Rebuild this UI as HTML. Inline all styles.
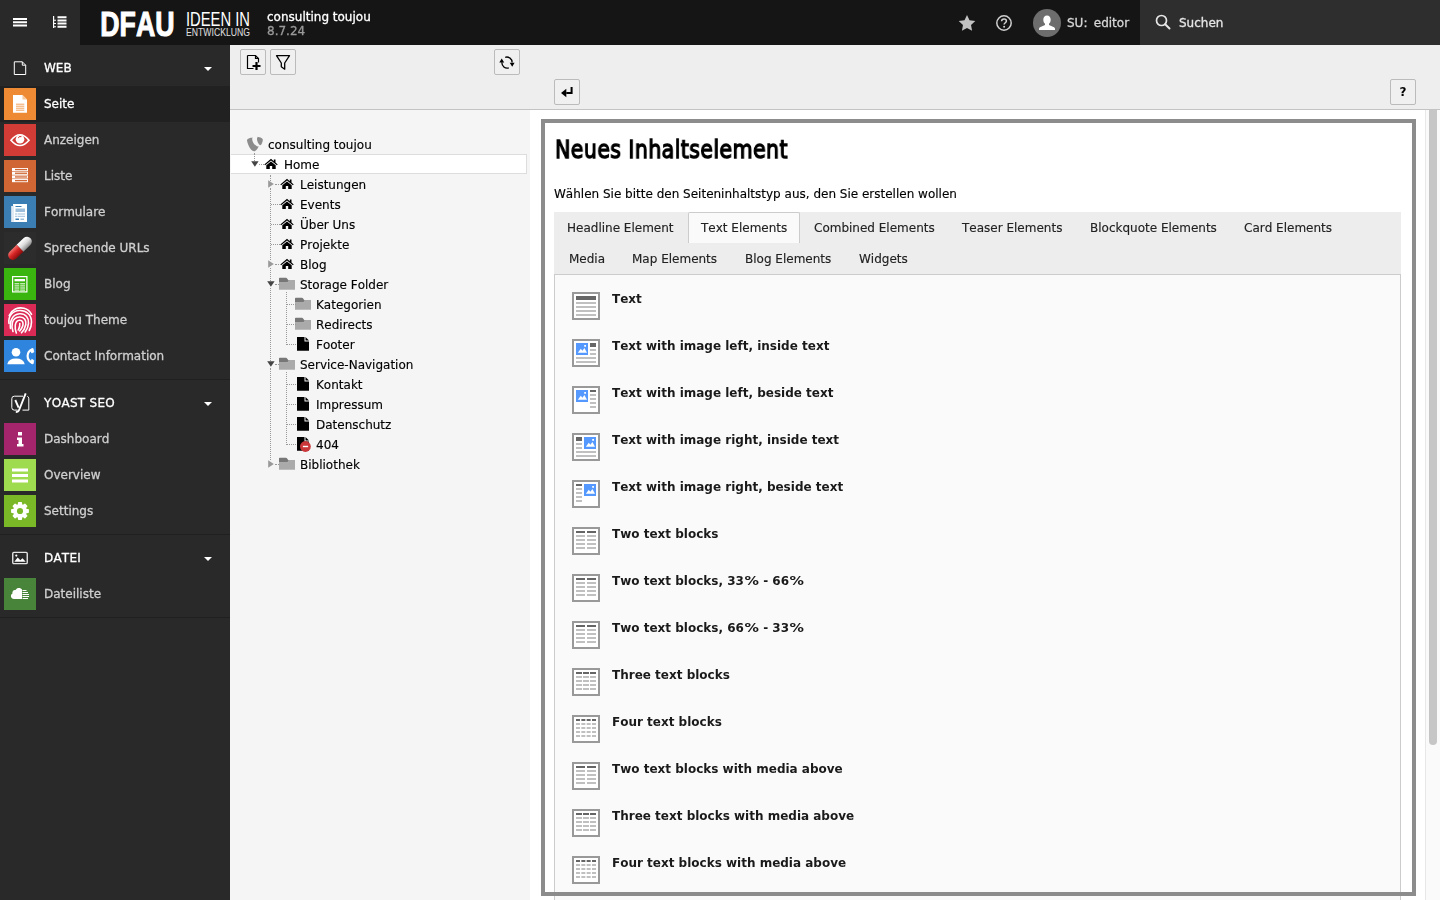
<!DOCTYPE html>
<html lang="de">
<head>
<meta charset="utf-8">
<title>consulting toujou [TYPO3 CMS 8.7.24]</title>
<style>
*{box-sizing:border-box;margin:0;padding:0}
html,body{width:1440px;height:900px;overflow:hidden;background:#fff}
body{font-family:"DejaVu Sans","Liberation Sans",sans-serif;font-size:12px;color:#000;position:relative;font-kerning:none}
svg{display:block}
.mg .t,.mi .l,.row span,.tab,.it b,#intro,#site,#user,#search span,.btn .q{will-change:transform}
.mg .t,.mi .l,#site,#user,#search span{-webkit-text-stroke:.3px}
.row span,.tab,#intro{-webkit-text-stroke:.15px}
/* topbar */
#topbar{position:absolute;left:0;top:0;width:1440px;height:45px;background:#151515;color:#fff}
#tb-left{position:absolute;left:0;top:0;width:80px;height:45px;background:#292929}
#tb-left .b{position:absolute;top:0;width:40px;height:45px}
#logo{position:absolute;left:99px;top:0;height:45px;width:160px}
#site{position:absolute;left:267px;top:10px;font-size:12px;line-height:14px;color:#fff;font-weight:bold}
#site .n{display:block;font-weight:normal;color:#fff}
#site .v{display:block;color:#9a9a9a;font-weight:normal}
#tb-right{position:absolute;right:0;top:0;height:45px}
#search{position:absolute;left:1140px;top:0;width:300px;height:45px;background:#2e2e2e}
#search span{position:absolute;left:39px;top:15px;font-size:12px;line-height:16px;color:#e6e6e6}
#user{word-spacing:2.500px;position:absolute;left:1067px;top:15px;font-size:12px;line-height:16px;color:#d7d7d7}
/* module menu */
#mm{position:absolute;left:0;top:45px;width:230px;height:855px;background:#292929;color:#c8c8c8}
.mg{position:absolute;left:0;width:230px;height:36px}
.mg .t{position:absolute;left:44px;top:10px;font-size:12px;line-height:16px;color:#fff}
.mg .car{position:absolute;left:204px;top:17px;width:0;height:0;border-left:4px solid transparent;border-right:4px solid transparent;border-top:4px solid #fff}
.mg svg{position:absolute}
.mi{position:absolute;left:0;width:230px;height:36px}
.mi.act{background:#212121}
.mi .ic{position:absolute;left:4px;top:2px;width:32px;height:32px}
.mi .l{position:absolute;left:44px;top:10px;font-size:12px;line-height:16px;color:#cfcfcf}
.mi.act .l{color:#fff}
.sep{position:absolute;left:0;width:230px;height:1px;background:#202020}
/* tree */
#tree{position:absolute;left:230px;top:45px;width:300px;height:855px;background:#f5f5f5}
#tree .tb{position:absolute;left:0;top:0;width:300px;height:65px;background:#eee;border-bottom:1px solid #c3c3c3}
.btn{position:absolute;width:26px;height:26px;background:#f0f0f0;border:1px solid #bbb;border-radius:2px}
.btn .q{position:absolute;left:0;top:4px;width:24px;text-align:center;font-size:12px;line-height:16px}
.row{position:absolute;left:0;width:300px;height:20px;font-size:12px;line-height:20px;color:#000;white-space:nowrap}
.row span{position:absolute;top:1px}
.row.sel{left:1px;width:296px;background:#fff;border:1px solid #ddd;border-left:0;line-height:18px}
.row.sel svg{margin:-1px 0 0 -1px}
.row.sel span{margin-left:-1px}
.dv{position:absolute;width:0;border-left:1px dotted #999}
.dh{position:absolute;height:0;border-top:1px dotted #999}
.row svg{position:absolute}
/* content */
#doc{position:absolute;left:530px;top:45px;width:910px;height:65px;background:#eee;border-bottom:1px solid #c3c3c3}
#body{position:absolute;left:530px;top:110px;width:895px;height:790px;background:#fff}
#frame{position:absolute;left:541px;top:119px;width:875px;height:777px;border:4px solid #8c8c8c;z-index:5}
#sb{position:absolute;left:1425px;top:110px;width:15px;height:790px;background:#fafafa;border-left:1px solid #e8e8e8}
#sb{overflow:hidden}
#sb i{position:absolute;left:3px;top:-6px;width:8px;height:641px;background:#c6c6c6;border-radius:4px}
h1{position:absolute;left:554.5px;top:131px;font-size:25.500px;line-height:36px;font-weight:normal;white-space:nowrap;transform-origin:0 50%;transform:scaleX(.806);-webkit-text-stroke:1.350px #000;will-change:transform;letter-spacing:.5px}
#intro{position:absolute;left:554px;top:186px;font-size:12px;line-height:16px;white-space:nowrap}
#tabs{position:absolute;left:554px;top:212px;width:847px;height:62px;background:#ededed}
.tab{position:absolute;font-size:12px;line-height:16px;color:#222;white-space:nowrap}
#tabact{position:absolute;left:134px;top:0;width:112px;height:31px;background:#fafafa;border:1px solid #ccc;border-bottom:0;border-radius:2px 2px 0 0}
#panel{position:absolute;left:554px;top:274px;width:847px;height:640px;background:#fafafa;border:1px solid #ccc}
.it{position:absolute;left:570px;width:700px;height:32px}
.it svg{position:absolute;left:0;top:0}
.pc{display:inline-block;width:15.200px;text-align:center;font-style:normal;transform:scaleX(1.2)}
.it b{position:absolute;left:42px;top:1px;font-size:12px;line-height:16px;color:#1a1a1a;white-space:nowrap}
</style>
</head>
<body>
<div id="topbar">
 <div id="tb-left"><svg width="14" height="9" viewBox="0 0 14 9" style="position:absolute;left:13px;top:18px"><path d="M0 0h14v2H0zM0 3.250h14v2H0zM0 6.500h14v2H0z" fill="#fff"/></svg><svg width="14" height="12" viewBox="0 0 14 12" style="position:absolute;left:53px;top:16px"><path d="M0 0h1.200v12H0zM1 3.800h2v1H1zM1 7h2v1H1zM1 10.300h2v1H1z M4.500 .3h9v2h-9zM4.500 3.400h9v2h-9zM4.500 6.600h9v2h-9zM4.500 9.800h9v2h-9z" fill="#fff"/></svg></div>
 <svg id="logo" width="160" height="45" viewBox="0 0 160 45"><text x="1.300" y="35.800" font-family="Liberation Sans,DejaVu Sans,sans-serif" font-weight="bold" font-size="35.200" fill="#fff" stroke="#fff" stroke-width="1.100" textLength="74.200" lengthAdjust="spacingAndGlyphs">DFAU</text><text x="87" y="25.600" font-family="Liberation Sans,DejaVu Sans,sans-serif" font-size="21" fill="#fff" textLength="64" lengthAdjust="spacingAndGlyphs">IDEEN IN</text><text x="87" y="36.200" font-family="Liberation Sans,DejaVu Sans,sans-serif" font-size="11" fill="#e0e0e0" textLength="64" lengthAdjust="spacingAndGlyphs">ENTWICKLUNG</text></svg>
 <div id="site"><span class="n">consulting toujou</span><span class="v">8.7.24</span></div>
 <svg width="18" height="18" viewBox="0 0 18 18" style="position:absolute;left:958px;top:14px"><path d="M9 1l2.500 5.300 5.800.7-4.300 4 1.100 5.800L9 14l-5.100 2.800L5 11 .7 7l5.800-.7z" fill="#c2c2c2"/></svg><svg width="18" height="18" viewBox="0 0 18 18" style="position:absolute;left:995px;top:14px"><circle cx="9" cy="9" r="7.200" fill="none" stroke="#d0d0d0" stroke-width="1.500"/><path d="M6.600 7.200c0-1.500 1.100-2.300 2.400-2.300s2.400.8 2.400 2.100c0 1.700-2.300 1.800-2.300 3.600" fill="none" stroke="#d0d0d0" stroke-width="1.500"/><circle cx="9.100" cy="12.800" r="1" fill="#d0d0d0"/></svg><svg width="28" height="28" viewBox="0 0 28 28" style="position:absolute;left:1033px;top:9px"><circle cx="14" cy="14" r="14" fill="#6d6d6d"/><path d="M14 6.500c2.300 0 3.700 1.800 3.700 4.200 0 1.700-.8 3.300-1.700 4v1.300l4.500 2c.8.400 1.500 1 1.500 2v1H6v-1c0-1 .7-1.600 1.500-2l4.500-2v-1.300c-.9-.7-1.700-2.300-1.700-4 0-2.400 1.400-4.200 3.700-4.200z" fill="#fff"/></svg>
 <div id="user">SU: editor</div>
 <div id="search"><svg width="16" height="16" viewBox="0 0 16 16" style="position:absolute;left:15px;top:14px"><circle cx="6.500" cy="6.500" r="5" fill="none" stroke="#e6e6e6" stroke-width="1.700"/><path d="M10.200 10.200l4.300 4.300" stroke="#e6e6e6" stroke-width="2" stroke-linecap="round"/></svg><span>Suchen</span></div>
</div>
<div id="mm">
<div class="mg" style="top:5px"><svg width="16" height="16" viewBox="0 0 16 16" style="left:12px;top:10px"><path d="M2.300 1.800h8l3.400 3.400v9.300H2.300z M10.300 1.800v3.400h3.400" fill="none" stroke="#fff" stroke-width="1"/></svg><span class="t">WEB</span><i class="car"></i></div>
<div class="mi act" style="top:41px"><div class="ic" style="background:#ef8a34"><svg width="32" height="32" viewBox="0 0 32 32"><path d="M9 7h9.500L23 11.500v13.200H9z" fill="#fff"/><path d="M18.500 7v4.500H23z" fill="#f8c79c"/><path d="M12 16.200h8.300M12 18.200h8.300M12 20.200h8.300M12 22.200h8.300" stroke="#ef8a34" stroke-width=".8"/></svg></div><span class="l">Seite</span></div>
<div class="mi" style="top:77px"><div class="ic" style="background:#d13c37"><svg width="32" height="32" viewBox="0 0 32 32"><path d="M7 16.200q9-11 18 0q-9 10.500-18 0z" fill="none" stroke="#fff" stroke-width="1.600"/><circle cx="16" cy="15.300" r="4.300" fill="#fff"/><path d="M14.300 13.800a2.200 2.200 0 0 1 3-1.200a3 3 0 0 0-3 1.200z" fill="#d13c37" stroke="#d13c37" stroke-width=".8"/></svg></div><span class="l">Anzeigen</span></div>
<div class="mi" style="top:113px"><div class="ic" style="background:#cf6633"><svg width="32" height="32" viewBox="0 0 32 32"><rect x="8" y="8" width="16" height="3.100" fill="#fff"/><rect x="11" y="8.9" width="12.100" height="1.300" fill="#cf6633"/><rect x="8" y="11.7" width="16" height="3.100" fill="#fff"/><rect x="11" y="12.6" width="12.100" height="1.300" fill="#cf6633"/><rect x="8" y="15.4" width="16" height="3.100" fill="#fff"/><rect x="11" y="16.3" width="12.100" height="1.300" fill="#cf6633"/><rect x="8" y="19.1" width="16" height="3.100" fill="#fff"/><rect x="11" y="20.0" width="12.100" height="1.300" fill="#cf6633"/></svg></div><span class="l">Liste</span></div>
<div class="mi" style="top:149px"><div class="ic" style="background:#3b7eb4"><svg width="32" height="32" viewBox="0 0 32 32"><rect x="7.300" y="10" width="2.200" height="16" fill="#fff"/><rect x="9" y="8" width="14" height="18" fill="#fff"/><rect x="8.700" y="9.500" width=".6" height="16.500" fill="#3b7eb4" opacity=".5"/><rect x="11.500" y="10" width="6" height="1" fill="#3b7eb4"/><rect x="11.500" y="12.500" width="9.500" height="3.500" fill="#9dbfdc"/><rect x="11.500" y="17.500" width="1" height="1" fill="#3b7eb4"/><rect x="13.500" y="17.500" width="7.500" height="1" fill="#9dbfdc"/><rect x="11.500" y="19.800" width="1" height="1" fill="#3b7eb4"/><rect x="13.500" y="19.800" width="7.500" height="1" fill="#9dbfdc"/><rect x="11.500" y="22.500" width="3.500" height="1.500" fill="#3b7eb4"/><rect x="16.500" y="22.500" width="3.500" height="1.500" fill="#9dbfdc"/></svg></div><span class="l">Formulare</span></div>
<div class="mi" style="top:185px"><div class="ic" style="background:#2c2c2c"><svg width="32" height="32" viewBox="0 0 32 32"><defs><linearGradient id="pg1" x1="0" y1="0" x2="0" y2="1"><stop offset="0" stop-color="#fff"/><stop offset=".5" stop-color="#dcdcdc"/><stop offset="1" stop-color="#8a8a8a"/></linearGradient><linearGradient id="pg2" x1="0" y1="0" x2="0" y2="1"><stop offset="0" stop-color="#f2736e"/><stop offset=".45" stop-color="#d62424"/><stop offset="1" stop-color="#8a0e0e"/></linearGradient></defs><g transform="rotate(-44 16 16.300)"><path d="M16 11.500h9.800a4.800 4.800 0 0 1 0 9.600H16z" fill="url(#pg1)"/><path d="M16 11.500H6.200a4.800 4.800 0 0 0 0 9.600H16z" fill="url(#pg2)"/></g></svg></div><span class="l">Sprechende URLs</span></div>
<div class="mi" style="top:221px"><div class="ic" style="background:#3ab40e"><svg width="32" height="32" viewBox="0 0 32 32"><rect x="8.600" y="8.600" width="14.300" height="15.300" fill="none" stroke="#fff" stroke-width="1.200"/><rect x="10.500" y="11" width="10.500" height="2.300" fill="#fff"/><rect x="10.500" y="15.3" width="4.800" height="1" fill="#fff"/><rect x="16.200" y="15.3" width="4.800" height="1" fill="#fff"/><rect x="10.500" y="17.4" width="4.800" height="1" fill="#fff"/><rect x="16.200" y="17.4" width="4.800" height="1" fill="#fff"/><rect x="10.500" y="19.5" width="4.800" height="1" fill="#fff"/><rect x="16.200" y="19.5" width="4.800" height="1" fill="#fff"/><rect x="10.500" y="21.6" width="4.800" height="1" fill="#fff"/><rect x="16.200" y="21.6" width="4.800" height="1" fill="#fff"/></svg></div><span class="l">Blog</span></div>
<div class="mi" style="top:257px"><div class="ic" style="background:#dc2a56"><svg width="32" height="32" viewBox="0 0 32 32"><g fill="none" stroke="#fff" stroke-width="1.600" stroke-linecap="round"><path d="M5.200 11.500C8 5.500 14 2.800 20 4.300c3.300.9 6 3 7.500 6"/><path d="M5 19.500C4 12 8.500 6.800 15.500 6.500 22.500 6.200 27.500 11 27.500 18c0 3-.8 6-2.300 8.500"/><path d="M6.500 24.500C5.500 17 8.500 10.300 15.500 9.800c6.300-.4 9.500 4.500 9 9.500-.3 3.300-1.500 6.300-3.300 8.700"/><path d="M9 27.500c-1.800-5-2-14 6.500-14.500 5-.3 7 4 6.300 7.500-.6 3.200-2 6-4.300 8.300"/><path d="M12.300 29c-1.500-3.500-2.300-12.500 3.200-12.800 3.500-.2 4 3.300 3.200 5.800-.7 2.200-1.700 3.500-3 5"/><path d="M15.800 19.500c.3 3-.5 4.500-1.500 6.500"/></g></svg></div><span class="l">toujou Theme</span></div>
<div class="mi" style="top:293px"><div class="ic" style="background:#2f85dd"><svg width="32" height="32" viewBox="0 0 32 32"><circle cx="12" cy="12.300" r="4.300" fill="#fff"/><path d="M3.300 24.300q1-5.800 8.700-5.800t8.700 5.800z" fill="#fff"/><path d="M28.600 9.300c-3.300 1.200-5 3.700-5 6.800s1.700 5.600 5 7" fill="none" stroke="#fff" stroke-width="2.200"/><path d="M29 8.400l-2.800 1.300 1.600 3.300 2-1zM29 24l-2.800-1.500 1.600-3.200 2 1.200z" fill="#fff" stroke="#fff" stroke-width=".8" stroke-linejoin="round"/></svg></div><span class="l">Contact Information</span></div>
<div class="sep" style="top:334px"></div>
<div class="mg" style="top:340px"><svg width="20" height="22" viewBox="0 0 20 22" style="left:10px;top:7px"><path d="M13 4.200H4.300q-2.500 0-2.500 2.500v8.900q0 2.500 2.500 2.500h3.200M12.500 18.100h6.300V6.700q0-2-1.500-2.400" fill="none" stroke="#fff" stroke-width="1"/><path d="M5.300 8l3.300 7.600M15.700 1.300L9.300 17.500q-1 2.600-3.500 2.600" fill="none" stroke="#fff" stroke-width="1.900"/></svg><span class="t" style="letter-spacing:.3px">YOAST SEO</span><i class="car"></i></div>
<div class="mi" style="top:376px"><div class="ic" style="background:#a4256c"><svg width="32" height="32" viewBox="0 0 32 32"><rect x="14" y="9" width="4" height="3.500" fill="#fff"/><path d="M13 14.500h5v6.500h1.500v2.500h-6.500v-2.500h1.500v-4H13z" fill="#fff"/></svg></div><span class="l">Dashboard</span></div>
<div class="mi" style="top:412px"><div class="ic" style="background:#9edb4e"><svg width="32" height="32" viewBox="0 0 32 32"><rect x="8" y="9.500" width="16" height="3" fill="#fff"/><rect x="8" y="15" width="16" height="3" fill="#fff"/><rect x="8" y="20.500" width="16" height="3" fill="#fff"/></svg></div><span class="l">Overview</span></div>
<div class="mi" style="top:448px"><div class="ic" style="background:#7ab827"><svg width="32" height="32" viewBox="0 0 32 32"><path d="M21.99 14.41 L24.19 14.68 L24.19 17.32 L21.99 17.59 L21.36 19.11 L22.73 20.86 L20.86 22.73 L19.11 21.36 L17.59 21.99 L17.32 24.19 L14.68 24.19 L14.41 21.99 L12.89 21.36 L11.14 22.73 L9.27 20.86 L10.64 19.11 L10.01 17.59 L7.81 17.32 L7.81 14.68 L10.01 14.41 L10.64 12.89 L9.27 11.14 L11.14 9.27 L12.89 10.64 L14.41 10.01 L14.68 7.81 L17.32 7.81 L17.59 10.01 L19.11 10.64 L20.86 9.27 L22.73 11.14 L21.36 12.89z" fill="#fff" stroke="#fff" stroke-width="1.400" stroke-linejoin="round"/><circle cx="16" cy="16" r="3.100" fill="#7ab827"/></svg></div><span class="l">Settings</span></div>
<div class="sep" style="top:489px"></div>
<div class="mg" style="top:495px"><svg width="16" height="16" viewBox="0 0 16 16" style="left:12px;top:10px"><rect x=".75" y="2.400" width="14.500" height="11.200" rx="1.200" fill="none" stroke="#e4e4e4" stroke-width="1.400"/><path d="M2.300 11.800l3.400-4.300 2.600 2.800 2.200-2 3.200 3.500z" fill="#fff"/><circle cx="4.300" cy="5.600" r="1.100" fill="#fff"/></svg><span class="t" style="letter-spacing:.2px">DATEI</span><i class="car"></i></div>
<div class="mi" style="top:531px"><div class="ic" style="background:#48853a"><svg width="32" height="32" viewBox="0 0 32 32"><path d="M10 21h8V11.500c-1-2-5-2.500-6.500.5-2.500-.3-3.500 2-3 3.500-2.500 1-2 5.500 1.500 5.500z" fill="#fff"/><g stroke="#fff" stroke-width="1"><path d="M18.500 12.500h4M18.500 14.500h5.500M18.500 16.500h6.500M18.500 18.500h6.500M18.500 20.500h5.500"/></g></svg></div><span class="l">Dateiliste</span></div>
<div class="sep" style="top:572px"></div>
</div>
<div id="tree"><div class="tb"><div class="btn" style="left:10px;top:4px"><svg width="24" height="24" viewBox="0 0 24 24"><path d="M6.500 5.500h8l3 3v4M14.500 5.500v3h3M6.500 5.500v13h6" fill="none" stroke="#000" stroke-width="1.200"/><path d="M15.500 12v8M11.500 16h8" stroke="#000" stroke-width="2.200"/></svg></div><div class="btn" style="left:40px;top:4px"><svg width="24" height="24" viewBox="0 0 24 24"><path d="M5.500 5.700h13l-4.800 7.300v6.200l-3.400-2.400v-3.800z" fill="none" stroke="#000" stroke-width="1.300" stroke-linejoin="round"/></svg></div><div class="btn" style="left:264px;top:4px"><svg width="24" height="24" viewBox="0 0 24 24"><path d="M10.200 7.300a5.300 5.300 0 0 1 6.900 5.200M13.800 17.800a5.300 5.300 0 0 1-6.900-5.500" fill="none" stroke="#000" stroke-width="1.300"/><path d="M4.300 12.500l2.400-4 2.500 4zM14.700 12.800h4.900l-2.400 4z" fill="#000"/></svg></div></div>
<div class="row" style="top:89px"><svg width="16" height="16" viewBox="0 0 16 16" style="left:17px;top:2px"><path d="M11.700 10.300c-.3.100-.5.100-.8.100-2.300 0-5.700-3.900-5.700-7.100 0-1.200.3-1.600.7-1.900C3.100 1.700 0 2.700 0 4.100c0 2.300 3.100 11.200 7 11.200 1.500 0 3.300-1.700 4.700-5z" fill="#8c8c8c"/><path d="M9.400.5c2.700 0 6.600.9 6.600 3 0 2.500-1.600 5.500-2.400 5.500-1.500 0-3.400-3.900-3.400-6.200 0-1.200.4-1.600.9-2.300z" fill="#8c8c8c" transform="translate(-.2 .3)"/></svg><span style="left:38px">consulting toujou</span></div>
<div class="row sel" style="top:109px"><svg width="16" height="16" viewBox="0 0 16 16" style="left:17px;top:2px"><path d="M4.200 5.300h7.400L7.900 10.800z" fill="#444"/></svg><svg width="16" height="16" viewBox="0 0 16 16" style="left:33px;top:2px"><path d="M8 2.800L1.300 8.400l.8.900L8 4.500l5.900 4.800.8-.9L12.500 6.600V3.500h-1.700v1.700z M8 5.500L3.300 9.300V13h3.500v-3h2.400v3h3.500V9.300z" fill="#000"/></svg><span style="left:54px">Home</span></div>
<div class="row" style="top:129px"><svg width="16" height="16" viewBox="0 0 16 16" style="left:33px;top:2px"><path d="M5.200 4.300v7.400L10.800 8z" fill="#999"/></svg><svg width="16" height="16" viewBox="0 0 16 16" style="left:49px;top:2px"><path d="M8 2.800L1.300 8.400l.8.900L8 4.500l5.900 4.800.8-.9L12.500 6.600V3.500h-1.700v1.700z M8 5.500L3.300 9.300V13h3.500v-3h2.400v3h3.500V9.300z" fill="#000"/></svg><span style="left:70px">Leistungen</span></div>
<div class="row" style="top:149px"><svg width="16" height="16" viewBox="0 0 16 16" style="left:49px;top:2px"><path d="M8 2.800L1.300 8.400l.8.900L8 4.500l5.900 4.800.8-.9L12.500 6.600V3.500h-1.700v1.700z M8 5.500L3.300 9.300V13h3.500v-3h2.400v3h3.500V9.300z" fill="#000"/></svg><span style="left:70px">Events</span></div>
<div class="row" style="top:169px"><svg width="16" height="16" viewBox="0 0 16 16" style="left:49px;top:2px"><path d="M8 2.800L1.300 8.400l.8.900L8 4.500l5.900 4.800.8-.9L12.500 6.600V3.500h-1.700v1.700z M8 5.500L3.300 9.300V13h3.500v-3h2.400v3h3.500V9.300z" fill="#000"/></svg><span style="left:70px">Über Uns</span></div>
<div class="row" style="top:189px"><svg width="16" height="16" viewBox="0 0 16 16" style="left:49px;top:2px"><path d="M8 2.800L1.300 8.400l.8.900L8 4.500l5.900 4.800.8-.9L12.500 6.600V3.500h-1.700v1.700z M8 5.500L3.300 9.300V13h3.500v-3h2.400v3h3.500V9.300z" fill="#000"/></svg><span style="left:70px">Projekte</span></div>
<div class="row" style="top:209px"><svg width="16" height="16" viewBox="0 0 16 16" style="left:33px;top:2px"><path d="M5.200 4.300v7.400L10.800 8z" fill="#999"/></svg><svg width="16" height="16" viewBox="0 0 16 16" style="left:49px;top:2px"><path d="M8 2.800L1.300 8.400l.8.900L8 4.500l5.900 4.800.8-.9L12.500 6.600V3.500h-1.700v1.700z M8 5.500L3.300 9.300V13h3.500v-3h2.400v3h3.500V9.300z" fill="#000"/></svg><span style="left:70px">Blog</span></div>
<div class="row" style="top:229px"><svg width="16" height="16" viewBox="0 0 16 16" style="left:33px;top:2px"><path d="M4.200 5.300h7.400L7.900 10.800z" fill="#444"/></svg><svg width="16" height="16" viewBox="0 0 16 16" style="left:49px;top:2px"><path d="M0 6.200L8.500 6.200L10 4H16V13.750H0z" fill="#aaa"/><path d="M0 2.500q0-.75.750-.75H7q.6 0 .9.500L9.200 4H10L8.500 6.200H0z" fill="#777"/></svg><span style="left:70px">Storage Folder</span></div>
<div class="row" style="top:249px"><svg width="16" height="16" viewBox="0 0 16 16" style="left:65px;top:2px"><path d="M0 6.200L8.500 6.200L10 4H16V13.750H0z" fill="#aaa"/><path d="M0 2.500q0-.75.750-.75H7q.6 0 .9.500L9.200 4H10L8.500 6.200H0z" fill="#777"/></svg><span style="left:86px">Kategorien</span></div>
<div class="row" style="top:269px"><svg width="16" height="16" viewBox="0 0 16 16" style="left:65px;top:2px"><path d="M0 6.200L8.500 6.200L10 4H16V13.750H0z" fill="#aaa"/><path d="M0 2.500q0-.75.750-.75H7q.6 0 .9.500L9.200 4H10L8.500 6.200H0z" fill="#777"/></svg><span style="left:86px">Redirects</span></div>
<div class="row" style="top:289px"><svg width="16" height="16" viewBox="0 0 16 16" style="left:65px;top:2px"><path d="M2 1h7.500v4.500H14v9.200H2z M10.500 1L14 4.500h-3.500z" fill="#000"/></svg><span style="left:86px">Footer</span></div>
<div class="row" style="top:309px"><svg width="16" height="16" viewBox="0 0 16 16" style="left:33px;top:2px"><path d="M4.200 5.300h7.400L7.900 10.800z" fill="#444"/></svg><svg width="16" height="16" viewBox="0 0 16 16" style="left:49px;top:2px"><path d="M0 6.200L8.500 6.200L10 4H16V13.750H0z" fill="#aaa"/><path d="M0 2.500q0-.75.750-.75H7q.6 0 .9.500L9.200 4H10L8.500 6.200H0z" fill="#777"/></svg><span style="left:70px">Service-Navigation</span></div>
<div class="row" style="top:329px"><svg width="16" height="16" viewBox="0 0 16 16" style="left:65px;top:2px"><path d="M2 1h7.500v4.500H14v9.200H2z M10.500 1L14 4.500h-3.500z" fill="#000"/></svg><span style="left:86px">Kontakt</span></div>
<div class="row" style="top:349px"><svg width="16" height="16" viewBox="0 0 16 16" style="left:65px;top:2px"><path d="M2 1h7.500v4.500H14v9.200H2z M10.500 1L14 4.500h-3.500z" fill="#000"/></svg><span style="left:86px">Impressum</span></div>
<div class="row" style="top:369px"><svg width="16" height="16" viewBox="0 0 16 16" style="left:65px;top:2px"><path d="M2 1h7.500v4.500H14v9.200H2z M10.500 1L14 4.500h-3.500z" fill="#000"/></svg><span style="left:86px">Datenschutz</span></div>
<div class="row" style="top:389px"><svg width="16" height="16" viewBox="0 0 16 16" style="left:65px;top:2px"><path d="M2 1h7.500v4.500H14v9.200H2z M10.500 1L14 4.500h-3.500z" fill="#000"/><circle cx="10.400" cy="10.500" r="5.400" fill="#c9373b"/><rect x="7.900" y="9.800" width="5.200" height="1.400" fill="#fff"/></svg><span style="left:86px">404</span></div>
<div class="row" style="top:409px"><svg width="16" height="16" viewBox="0 0 16 16" style="left:33px;top:2px"><path d="M5.200 4.300v7.400L10.800 8z" fill="#999"/></svg><svg width="16" height="16" viewBox="0 0 16 16" style="left:49px;top:2px"><path d="M0 6.200L8.500 6.200L10 4H16V13.750H0z" fill="#aaa"/><path d="M0 2.500q0-.75.750-.75H7q.6 0 .9.500L9.200 4H10L8.500 6.200H0z" fill="#777"/></svg><span style="left:70px">Bibliothek</span></div>
<i class="dv" style="left:24px;top:108px;height:8px"></i>
<i class="dh" style="left:29px;top:119px;width:5px"></i>
<i class="dv" style="left:40px;top:130px;height:6px"></i>
<i class="dv" style="left:40px;top:143px;height:72px"></i>
<i class="dv" style="left:40px;top:223px;height:13px"></i>
<i class="dv" style="left:40px;top:243px;height:73px"></i>
<i class="dv" style="left:40px;top:323px;height:92px"></i>
<i class="dh" style="left:41px;top:159px;width:9px"></i>
<i class="dh" style="left:41px;top:179px;width:9px"></i>
<i class="dh" style="left:41px;top:199px;width:9px"></i>
<i class="dh" style="left:45px;top:139px;width:4px"></i>
<i class="dh" style="left:45px;top:219px;width:4px"></i>
<i class="dh" style="left:45px;top:239px;width:4px"></i>
<i class="dh" style="left:45px;top:319px;width:4px"></i>
<i class="dh" style="left:45px;top:419px;width:4px"></i>
<i class="dv" style="left:56px;top:247px;height:53px"></i>
<i class="dh" style="left:57px;top:259px;width:9px"></i>
<i class="dh" style="left:57px;top:279px;width:9px"></i>
<i class="dh" style="left:57px;top:299px;width:9px"></i>
<i class="dv" style="left:56px;top:327px;height:73px"></i>
<i class="dh" style="left:57px;top:339px;width:9px"></i>
<i class="dh" style="left:57px;top:359px;width:9px"></i>
<i class="dh" style="left:57px;top:379px;width:9px"></i>
<i class="dh" style="left:57px;top:399px;width:9px"></i>
</div>
<div id="doc"><div class="btn" style="left:24px;top:34px"><svg width="24" height="24" viewBox="0 0 24 24"><path d="M15.600 7h2v7h-6.300v-2h4.300z" fill="#000"/><path d="M6 13l5.300-4.200v8.400z" fill="#000"/></svg></div><div class="btn" style="left:860px;top:34px"><b class="q">?</b></div></div>
<div id="body"></div>
<div id="sb"><i></i></div>
<h1>Neues Inhaltselement</h1>
<div id="intro">Wählen Sie bitte den Seiteninhaltstyp aus, den Sie erstellen wollen</div>
<div id="tabs"><div id="tabact"></div><span class="tab" style="left:13px;top:8px">Headline Element</span><span class="tab" style="left:147px;top:8px">Text Elements</span><span class="tab" style="left:260px;top:8px">Combined Elements</span><span class="tab" style="left:408px;top:8px">Teaser Elements</span><span class="tab" style="left:536px;top:8px">Blockquote Elements</span><span class="tab" style="left:690px;top:8px">Card Elements</span><span class="tab" style="left:15px;top:39px">Media</span><span class="tab" style="left:78px;top:39px">Map Elements</span><span class="tab" style="left:191px;top:39px">Blog Elements</span><span class="tab" style="left:305px;top:39px">Widgets</span></div>
<div id="panel"></div>
<div class="it" style="top:290px"><svg width="32" height="32" viewBox="0 0 16 16"><path fill="#999" d="M1 1v14h14V1H1zm13 13H2V2h12v12z"/><path fill="#fff" d="M2 2h12v12H2z"/><path fill="#666" d="M3 3h10v2h-10z"/><path fill="#c0c0c0" d="M3 6h10v1h-10z"/><path fill="#c0c0c0" d="M3 8h10v1h-10z"/><path fill="#c0c0c0" d="M3 10h10v1h-10z"/><path fill="#c0c0c0" d="M3 12h10v1h-10z"/></svg><b>Text</b></div>
<div class="it" style="top:337px"><svg width="32" height="32" viewBox="0 0 16 16"><path fill="#999" d="M1 1v14h14V1H1zm13 13H2V2h12v12z"/><path fill="#fff" d="M2 2h12v12H2z"/><path fill="#5599ff" d="M3 3h6v6h-6z"/><path fill="#fff" d="M3.9 7.900l1.500-2 .8 1 1-1.400 1.300 2.400z"/><path fill="#fff" d="M7.1 4h.9v.9h-.9z"/><path fill="#666" d="M10 3h3v2h-3z"/><path fill="#c0c0c0" d="M10 6h3v1h-3z"/><path fill="#c0c0c0" d="M10 8h3v1h-3z"/><path fill="#c0c0c0" d="M3 10h10v1h-10z"/><path fill="#c0c0c0" d="M3 12h10v1h-10z"/></svg><b>Text with image left, inside text</b></div>
<div class="it" style="top:384px"><svg width="32" height="32" viewBox="0 0 16 16"><path fill="#999" d="M1 1v14h14V1H1zm13 13H2V2h12v12z"/><path fill="#fff" d="M2 2h12v12H2z"/><path fill="#5599ff" d="M3 3h6v6h-6z"/><path fill="#fff" d="M3.9 7.900l1.500-2 .8 1 1-1.400 1.300 2.400z"/><path fill="#fff" d="M7.1 4h.9v.9h-.9z"/><path fill="#666" d="M10 3h3v1h-3z"/><path fill="#c0c0c0" d="M10 5h3v1h-3z"/><path fill="#c0c0c0" d="M10 7h3v1h-3z"/><path fill="#c0c0c0" d="M10 9h3v1h-3z"/><path fill="#c0c0c0" d="M10 11h3v1h-3z"/></svg><b>Text with image left, beside text</b></div>
<div class="it" style="top:431px"><svg width="32" height="32" viewBox="0 0 16 16"><path fill="#999" d="M1 1v14h14V1H1zm13 13H2V2h12v12z"/><path fill="#fff" d="M2 2h12v12H2z"/><path fill="#5599ff" d="M7 3h6v6h-6z"/><path fill="#fff" d="M7.9 7.900l1.500-2 .8 1 1-1.400 1.300 2.400z"/><path fill="#fff" d="M11.1 4h.9v.9h-.9z"/><path fill="#666" d="M3 3h3v2h-3z"/><path fill="#c0c0c0" d="M3 6h3v1h-3z"/><path fill="#c0c0c0" d="M3 8h3v1h-3z"/><path fill="#c0c0c0" d="M3 10h10v1h-10z"/><path fill="#c0c0c0" d="M3 12h10v1h-10z"/></svg><b>Text with image right, inside text</b></div>
<div class="it" style="top:478px"><svg width="32" height="32" viewBox="0 0 16 16"><path fill="#999" d="M1 1v14h14V1H1zm13 13H2V2h12v12z"/><path fill="#fff" d="M2 2h12v12H2z"/><path fill="#5599ff" d="M7 3h6v6h-6z"/><path fill="#fff" d="M7.9 7.900l1.500-2 .8 1 1-1.400 1.300 2.400z"/><path fill="#fff" d="M11.1 4h.9v.9h-.9z"/><path fill="#666" d="M3 3h3v1h-3z"/><path fill="#c0c0c0" d="M3 5h3v1h-3z"/><path fill="#c0c0c0" d="M3 7h3v1h-3z"/><path fill="#c0c0c0" d="M3 9h3v1h-3z"/><path fill="#c0c0c0" d="M3 11h3v1h-3z"/></svg><b>Text with image right, beside text</b></div>
<div class="it" style="top:525px"><svg width="32" height="32" viewBox="0 0 16 16"><path fill="#999" d="M1 1v14h14V1H1zm13 13H2V2h12v12z"/><path fill="#fff" d="M2 2h12v12H2z"/><path fill="#666" d="M3 3h4.5v1h-4.5z"/><path fill="#c0c0c0" d="M3 5h4.5v1h-4.5z"/><path fill="#c0c0c0" d="M3 7h4.5v1h-4.5z"/><path fill="#c0c0c0" d="M3 9h4.5v1h-4.5z"/><path fill="#c0c0c0" d="M3 11h4.5v1h-4.5z"/><path fill="#666" d="M8.5 3h4.5v1h-4.5z"/><path fill="#c0c0c0" d="M8.5 5h4.5v1h-4.5z"/><path fill="#c0c0c0" d="M8.5 7h4.5v1h-4.5z"/><path fill="#c0c0c0" d="M8.5 9h4.5v1h-4.5z"/><path fill="#c0c0c0" d="M8.5 11h4.5v1h-4.5z"/></svg><b>Two text blocks</b></div>
<div class="it" style="top:572px"><svg width="32" height="32" viewBox="0 0 16 16"><path fill="#999" d="M1 1v14h14V1H1zm13 13H2V2h12v12z"/><path fill="#fff" d="M2 2h12v12H2z"/><path fill="#666" d="M3 3h4.5v1h-4.5z"/><path fill="#c0c0c0" d="M3 5h4.5v1h-4.5z"/><path fill="#c0c0c0" d="M3 7h4.5v1h-4.5z"/><path fill="#c0c0c0" d="M3 9h4.5v1h-4.5z"/><path fill="#c0c0c0" d="M3 11h4.5v1h-4.5z"/><path fill="#666" d="M8.5 3h4.5v1h-4.5z"/><path fill="#c0c0c0" d="M8.5 5h4.5v1h-4.5z"/><path fill="#c0c0c0" d="M8.5 7h4.5v1h-4.5z"/><path fill="#c0c0c0" d="M8.5 9h4.5v1h-4.5z"/><path fill="#c0c0c0" d="M8.5 11h4.5v1h-4.5z"/></svg><b>Two text blocks, 33<i class="pc">%</i> - 66<i class="pc">%</i></b></div>
<div class="it" style="top:619px"><svg width="32" height="32" viewBox="0 0 16 16"><path fill="#999" d="M1 1v14h14V1H1zm13 13H2V2h12v12z"/><path fill="#fff" d="M2 2h12v12H2z"/><path fill="#666" d="M3 3h4.5v1h-4.5z"/><path fill="#c0c0c0" d="M3 5h4.5v1h-4.5z"/><path fill="#c0c0c0" d="M3 7h4.5v1h-4.5z"/><path fill="#c0c0c0" d="M3 9h4.5v1h-4.5z"/><path fill="#c0c0c0" d="M3 11h4.5v1h-4.5z"/><path fill="#666" d="M8.5 3h4.5v1h-4.5z"/><path fill="#c0c0c0" d="M8.5 5h4.5v1h-4.5z"/><path fill="#c0c0c0" d="M8.5 7h4.5v1h-4.5z"/><path fill="#c0c0c0" d="M8.5 9h4.5v1h-4.5z"/><path fill="#c0c0c0" d="M8.5 11h4.5v1h-4.5z"/></svg><b>Two text blocks, 66<i class="pc">%</i> - 33<i class="pc">%</i></b></div>
<div class="it" style="top:666px"><svg width="32" height="32" viewBox="0 0 16 16"><path fill="#999" d="M1 1v14h14V1H1zm13 13H2V2h12v12z"/><path fill="#fff" d="M2 2h12v12H2z"/><path fill="#666" d="M3 3h3v1h-3z"/><path fill="#c0c0c0" d="M3 5h3v1h-3z"/><path fill="#c0c0c0" d="M3 7h3v1h-3z"/><path fill="#c0c0c0" d="M3 9h3v1h-3z"/><path fill="#c0c0c0" d="M3 11h3v1h-3z"/><path fill="#666" d="M6.5 3h3v1h-3z"/><path fill="#c0c0c0" d="M6.5 5h3v1h-3z"/><path fill="#c0c0c0" d="M6.5 7h3v1h-3z"/><path fill="#c0c0c0" d="M6.5 9h3v1h-3z"/><path fill="#c0c0c0" d="M6.5 11h3v1h-3z"/><path fill="#666" d="M10 3h3v1h-3z"/><path fill="#c0c0c0" d="M10 5h3v1h-3z"/><path fill="#c0c0c0" d="M10 7h3v1h-3z"/><path fill="#c0c0c0" d="M10 9h3v1h-3z"/><path fill="#c0c0c0" d="M10 11h3v1h-3z"/></svg><b>Three text blocks</b></div>
<div class="it" style="top:713px"><svg width="32" height="32" viewBox="0 0 16 16"><path fill="#999" d="M1 1v14h14V1H1zm13 13H2V2h12v12z"/><path fill="#fff" d="M2 2h12v12H2z"/><path fill="#666" d="M3 3h2v1h-2z"/><path fill="#c0c0c0" d="M3 5h2v1h-2z"/><path fill="#c0c0c0" d="M3 7h2v1h-2z"/><path fill="#c0c0c0" d="M3 9h2v1h-2z"/><path fill="#c0c0c0" d="M3 11h2v1h-2z"/><path fill="#666" d="M5.67 3h2v1h-2z"/><path fill="#c0c0c0" d="M5.67 5h2v1h-2z"/><path fill="#c0c0c0" d="M5.67 7h2v1h-2z"/><path fill="#c0c0c0" d="M5.67 9h2v1h-2z"/><path fill="#c0c0c0" d="M5.67 11h2v1h-2z"/><path fill="#666" d="M8.33 3h2v1h-2z"/><path fill="#c0c0c0" d="M8.33 5h2v1h-2z"/><path fill="#c0c0c0" d="M8.33 7h2v1h-2z"/><path fill="#c0c0c0" d="M8.33 9h2v1h-2z"/><path fill="#c0c0c0" d="M8.33 11h2v1h-2z"/><path fill="#666" d="M11 3h2v1h-2z"/><path fill="#c0c0c0" d="M11 5h2v1h-2z"/><path fill="#c0c0c0" d="M11 7h2v1h-2z"/><path fill="#c0c0c0" d="M11 9h2v1h-2z"/><path fill="#c0c0c0" d="M11 11h2v1h-2z"/></svg><b>Four text blocks</b></div>
<div class="it" style="top:760px"><svg width="32" height="32" viewBox="0 0 16 16"><path fill="#999" d="M1 1v14h14V1H1zm13 13H2V2h12v12z"/><path fill="#fff" d="M2 2h12v12H2z"/><path fill="#666" d="M3 3h4.5v1h-4.5z"/><path fill="#c0c0c0" d="M3 5h4.5v1h-4.5z"/><path fill="#c0c0c0" d="M3 7h4.5v1h-4.5z"/><path fill="#c0c0c0" d="M3 9h4.5v1h-4.5z"/><path fill="#c0c0c0" d="M3 11h4.5v1h-4.5z"/><path fill="#666" d="M8.5 3h4.5v1h-4.5z"/><path fill="#c0c0c0" d="M8.5 5h4.5v1h-4.5z"/><path fill="#c0c0c0" d="M8.5 7h4.5v1h-4.5z"/><path fill="#c0c0c0" d="M8.5 9h4.5v1h-4.5z"/><path fill="#c0c0c0" d="M8.5 11h4.5v1h-4.5z"/></svg><b>Two text blocks with media above</b></div>
<div class="it" style="top:807px"><svg width="32" height="32" viewBox="0 0 16 16"><path fill="#999" d="M1 1v14h14V1H1zm13 13H2V2h12v12z"/><path fill="#fff" d="M2 2h12v12H2z"/><path fill="#666" d="M3 3h3v1h-3z"/><path fill="#c0c0c0" d="M3 5h3v1h-3z"/><path fill="#c0c0c0" d="M3 7h3v1h-3z"/><path fill="#c0c0c0" d="M3 9h3v1h-3z"/><path fill="#c0c0c0" d="M3 11h3v1h-3z"/><path fill="#666" d="M6.5 3h3v1h-3z"/><path fill="#c0c0c0" d="M6.5 5h3v1h-3z"/><path fill="#c0c0c0" d="M6.5 7h3v1h-3z"/><path fill="#c0c0c0" d="M6.5 9h3v1h-3z"/><path fill="#c0c0c0" d="M6.5 11h3v1h-3z"/><path fill="#666" d="M10 3h3v1h-3z"/><path fill="#c0c0c0" d="M10 5h3v1h-3z"/><path fill="#c0c0c0" d="M10 7h3v1h-3z"/><path fill="#c0c0c0" d="M10 9h3v1h-3z"/><path fill="#c0c0c0" d="M10 11h3v1h-3z"/></svg><b>Three text blocks with media above</b></div>
<div class="it" style="top:854px"><svg width="32" height="32" viewBox="0 0 16 16"><path fill="#999" d="M1 1v14h14V1H1zm13 13H2V2h12v12z"/><path fill="#fff" d="M2 2h12v12H2z"/><path fill="#666" d="M3 3h2v1h-2z"/><path fill="#c0c0c0" d="M3 5h2v1h-2z"/><path fill="#c0c0c0" d="M3 7h2v1h-2z"/><path fill="#c0c0c0" d="M3 9h2v1h-2z"/><path fill="#c0c0c0" d="M3 11h2v1h-2z"/><path fill="#666" d="M5.67 3h2v1h-2z"/><path fill="#c0c0c0" d="M5.67 5h2v1h-2z"/><path fill="#c0c0c0" d="M5.67 7h2v1h-2z"/><path fill="#c0c0c0" d="M5.67 9h2v1h-2z"/><path fill="#c0c0c0" d="M5.67 11h2v1h-2z"/><path fill="#666" d="M8.33 3h2v1h-2z"/><path fill="#c0c0c0" d="M8.33 5h2v1h-2z"/><path fill="#c0c0c0" d="M8.33 7h2v1h-2z"/><path fill="#c0c0c0" d="M8.33 9h2v1h-2z"/><path fill="#c0c0c0" d="M8.33 11h2v1h-2z"/><path fill="#666" d="M11 3h2v1h-2z"/><path fill="#c0c0c0" d="M11 5h2v1h-2z"/><path fill="#c0c0c0" d="M11 7h2v1h-2z"/><path fill="#c0c0c0" d="M11 9h2v1h-2z"/><path fill="#c0c0c0" d="M11 11h2v1h-2z"/></svg><b>Four text blocks with media above</b></div>
<div id="frame"></div>
</body>
</html>
